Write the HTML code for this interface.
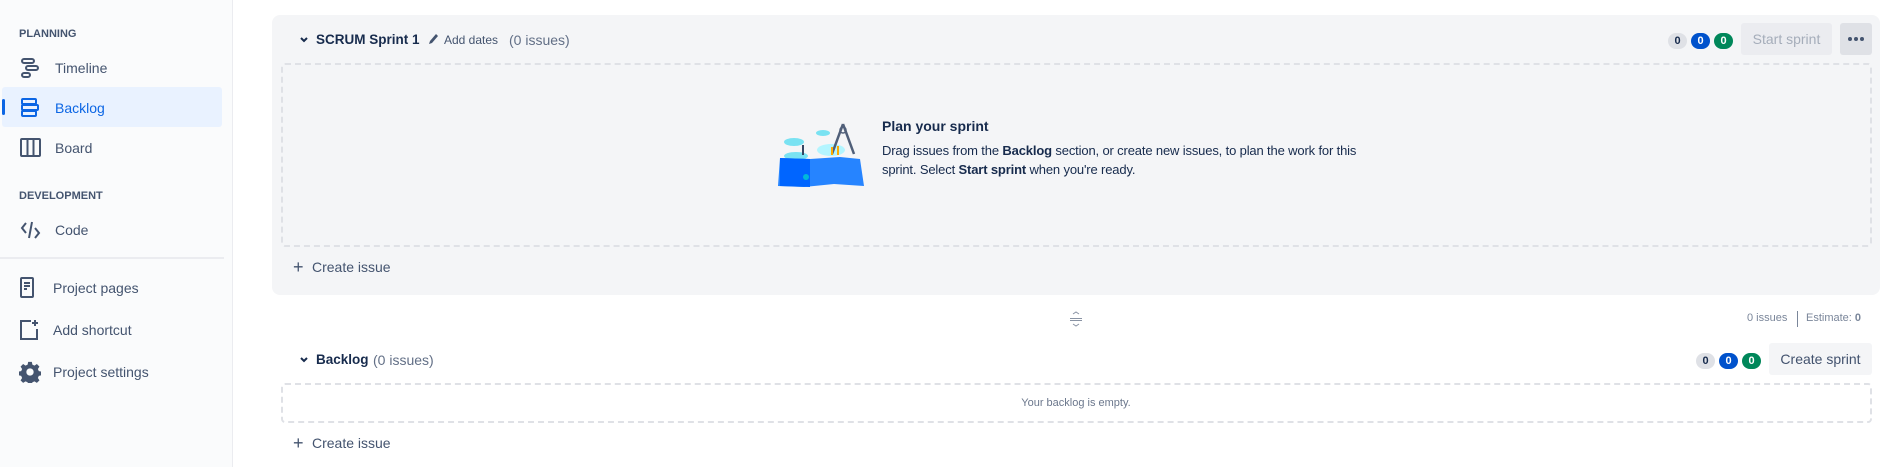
<!DOCTYPE html>
<html><head><style>
*{margin:0;padding:0;box-sizing:border-box}
body{width:1897px;height:467px;position:relative;overflow:hidden;background:#fff;font-family:"Liberation Sans",sans-serif;color:#172b4d}
.a{position:absolute;white-space:nowrap}
#sb{position:absolute;left:0;top:0;width:233px;height:467px;background:#fafbfc;border-right:1px solid #ebecf0}
.h{font-size:11px;font-weight:bold;color:#44546f}
.it{font-size:14px;color:#44546f;line-height:20px}
.badge{position:absolute;height:16px;width:19px;border-radius:8px;font-size:11px;font-weight:bold;text-align:center;line-height:16px}
.g{background:#dfe1e6;color:#172b4d}.b{background:#0052cc;color:#fff}.gr{background:#00875a;color:#fff}
.dash{position:absolute;border:2px dashed #dfe1e6;border-radius:4px}
</style></head><body>
<div id="sb">
<div class="a h" style="left:19px;top:28px">PLANNING</div>
<svg class="a" style="left:20px;top:57px" width="20" height="22" viewBox="0 0 20 22" fill="none" stroke="#44546f" stroke-width="2"><rect x="2" y="2" width="12" height="4" rx="2"/><rect x="6" y="9" width="12" height="4" rx="2"/><rect x="2" y="16" width="8" height="4" rx="2"/></svg>
<div class="a it" style="left:55px;top:58px">Timeline</div>
<div class="a" style="left:2px;top:87px;width:220px;height:40px;background:#e9f2ff;border-radius:3px"></div>
<div class="a" style="left:2px;top:99px;width:3px;height:16px;background:#0c66e4;border-radius:2px"></div>
<svg class="a" style="left:20px;top:97px" width="20" height="22" viewBox="0 0 20 22" fill="none" stroke="#0c66e4" stroke-width="2"><rect x="2" y="2" width="14" height="5" rx="1"/><rect x="2" y="8" width="16" height="5" rx="1"/><rect x="2" y="14" width="14" height="5" rx="1"/></svg>
<div class="a it" style="left:55px;top:98px;color:#0c66e4">Backlog</div>
<svg class="a" style="left:20px;top:138px" width="22" height="20" viewBox="0 0 22 20" fill="none" stroke="#44546f" stroke-width="2"><rect x="1" y="1" width="19" height="17" rx="1"/><path d="M7.5 1v17M13.5 1v17"/></svg>
<div class="a it" style="left:55px;top:138px">Board</div>
<div class="a h" style="left:19px;top:190px">DEVELOPMENT</div>
<svg class="a" style="left:20px;top:220px" width="22" height="20" viewBox="0 0 22 20" fill="none" stroke="#44546f" stroke-width="2"><path d="M6 3L2 8l4 5M15 8l4 5-4 5M12 2l-3 16"/></svg>
<div class="a it" style="left:55px;top:220px">Code</div>
<div class="a" style="left:0;top:257px;width:224px;height:2px;background:#ebecf0"></div>
<svg class="a" style="left:20px;top:277px" width="16" height="22" viewBox="0 0 16 22" fill="none" stroke="#44546f" stroke-width="2"><rect x="1" y="1" width="12" height="19" rx="1"/><path d="M4 6h6M4 9h6M4 12h3"/></svg>
<div class="a it" style="left:53px;top:278px">Project pages</div>
<svg class="a" style="left:19px;top:319px" width="22" height="22" viewBox="0 0 22 22" fill="none" stroke="#44546f" stroke-width="2"><path d="M12 2H2v18h16V10"/><path d="M16 1v6M13 4h6"/></svg>
<div class="a it" style="left:53px;top:320px">Add shortcut</div>
<svg class="a" style="left:19px;top:361px" width="22" height="22" viewBox="0 0 24 24" fill="#44546f"><path d="M10 1h4l.6 3 2.3 1 2.6-1.7 2.8 2.8-1.7 2.6 1 2.3 3 .6v4l-3 .6-1 2.3 1.7 2.6-2.8 2.8-2.6-1.7-2.3 1-.6 3h-4l-.6-3-2.3-1-2.6 1.7-2.8-2.8 1.7-2.6-1-2.3-3-.6v-4l3-.6 1-2.3-1.7-2.6 2.8-2.8 2.6 1.7 2.3-1zM12 8a4 4 0 100 8 4 4 0 000-8z"/></svg>
<div class="a it" style="left:53px;top:362px">Project settings</div>
</div>

<div class="a" style="left:272px;top:15px;width:1608px;height:280px;background:#f4f5f7;border-radius:8px"></div>
<svg class="a" style="left:299px;top:35px" width="10" height="10" viewBox="0 0 10 10"><path d="M2 3l3 3 3-3" stroke="#172b4d" stroke-width="2" fill="none"/></svg>
<div class="a" style="left:316px;top:32px;font-size:13.5px;font-weight:bold">SCRUM Sprint 1</div>
<svg class="a" style="left:428px;top:33px" width="11" height="12" viewBox="0 0 11 12"><path d="M8 1l2 2-6 7-3 1 1-3z" fill="#44546f"/></svg>
<div class="a" style="left:444px;top:33px;font-size:12px;color:#44546f">Add dates</div>
<div class="a" style="left:509px;top:32px;font-size:14px;color:#626f86">(0 issues)</div>
<div class="badge g" style="left:1668px;top:33px">0</div>
<div class="badge b" style="left:1691px;top:33px">0</div>
<div class="badge gr" style="left:1714px;top:33px">0</div>
<div class="a" style="left:1741px;top:23px;width:91px;height:32px;background:#ebecf0;border-radius:3px;color:#a5adba;font-size:14px;text-align:center;line-height:32px">Start sprint</div>
<div class="a" style="left:1840px;top:23px;width:32px;height:32px;background:#dfe1e6;border-radius:3px"></div>
<svg class="a" style="left:1840px;top:23px" width="32" height="32" viewBox="0 0 32 32" fill="#44546f"><circle cx="10" cy="16" r="2"/><circle cx="16" cy="16" r="2"/><circle cx="22" cy="16" r="2"/></svg>
<div class="dash" style="left:281px;top:63px;width:1591px;height:184px"></div>
<svg class="a" style="left:776px;top:122px" width="92" height="66" viewBox="0 0 92 66">
<ellipse cx="18" cy="20" rx="10" ry="4" fill="#79e2f2"/><ellipse cx="47" cy="11" rx="7" ry="3" fill="#79e2f2"/><ellipse cx="20" cy="34" rx="12" ry="4" fill="#79e2f2"/><ellipse cx="55" cy="28" rx="14" ry="6" fill="#b3f5ff"/>
<path d="M4 36l30 1 30-2 20 2 4 27-30-2-30 3-26-1z" fill="#2684ff"/><path d="M4 36l30 1v28l-30-1z" fill="#0065ff"/>
<path d="M67 2l-11 30M67 2l11 30" stroke="#505f79" stroke-width="2.5"/><circle cx="67" cy="8" r="3" fill="none" stroke="#505f79" stroke-width="1.5"/>
<path d="M56 25v8M62 24v9" stroke="#ffab00" stroke-width="2"/><path d="M27 23v10" stroke="#344563" stroke-width="2"/><circle cx="30" cy="55" r="3" fill="#00b8d9"/>
</svg>
<div class="a" style="left:882px;top:118px;font-size:14px;font-weight:bold;color:#172b4d">Plan your sprint</div>
<div class="a" style="left:882px;top:141px;font-size:13px;line-height:19px;color:#172b4d;white-space:normal;width:500px;letter-spacing:-0.15px">Drag issues from the <b>Backlog</b> section, or create new issues, to plan the work for this sprint. Select <b>Start sprint</b> when you're ready.</div>
<div class="a" style="left:293px;top:257px;font-size:18px;color:#44546f;line-height:20px">+</div>
<div class="a" style="left:312px;top:259px;font-size:14px;color:#44546f">Create issue</div>

<svg class="a" style="left:1069px;top:311px" width="14" height="17" viewBox="0 0 14 17" fill="none" stroke="#8993a4" stroke-width="1"><path d="M4 3l3-2 3 2M1 7.5h12M1 9.5h12M4 13l3 2 3-2"/></svg>
<div class="a" style="left:1747px;top:312px;font-size:11px;color:#7a869a">0 issues</div>
<div class="a" style="left:1797px;top:311px;width:1px;height:16px;background:#7a869a"></div>
<div class="a" style="left:1806px;top:312px;font-size:11px;color:#7a869a">Estimate: <b>0</b></div>

<svg class="a" style="left:299px;top:355px" width="10" height="10" viewBox="0 0 10 10"><path d="M2 3l3 3 3-3" stroke="#172b4d" stroke-width="2" fill="none"/></svg>
<div class="a" style="left:316px;top:352px;font-size:13.5px;font-weight:bold">Backlog</div>
<div class="a" style="left:373px;top:352px;font-size:14px;color:#626f86">(0 issues)</div>
<div class="badge g" style="left:1696px;top:353px">0</div>
<div class="badge b" style="left:1719px;top:353px">0</div>
<div class="badge gr" style="left:1742px;top:353px">0</div>
<div class="a" style="left:1769px;top:343px;width:103px;height:32px;background:#f4f5f7;border-radius:3px;color:#42526e;font-size:14px;text-align:center;line-height:32px">Create sprint</div>
<div class="dash" style="left:281px;top:383px;width:1591px;height:40px"></div>
<div class="a" style="left:0;width:2152px;top:397px;font-size:11px;color:#6b778c;text-align:center">Your backlog is empty.</div>
<div class="a" style="left:293px;top:433px;font-size:18px;color:#44546f;line-height:20px">+</div>
<div class="a" style="left:312px;top:435px;font-size:14px;color:#44546f">Create issue</div>
</body></html>
